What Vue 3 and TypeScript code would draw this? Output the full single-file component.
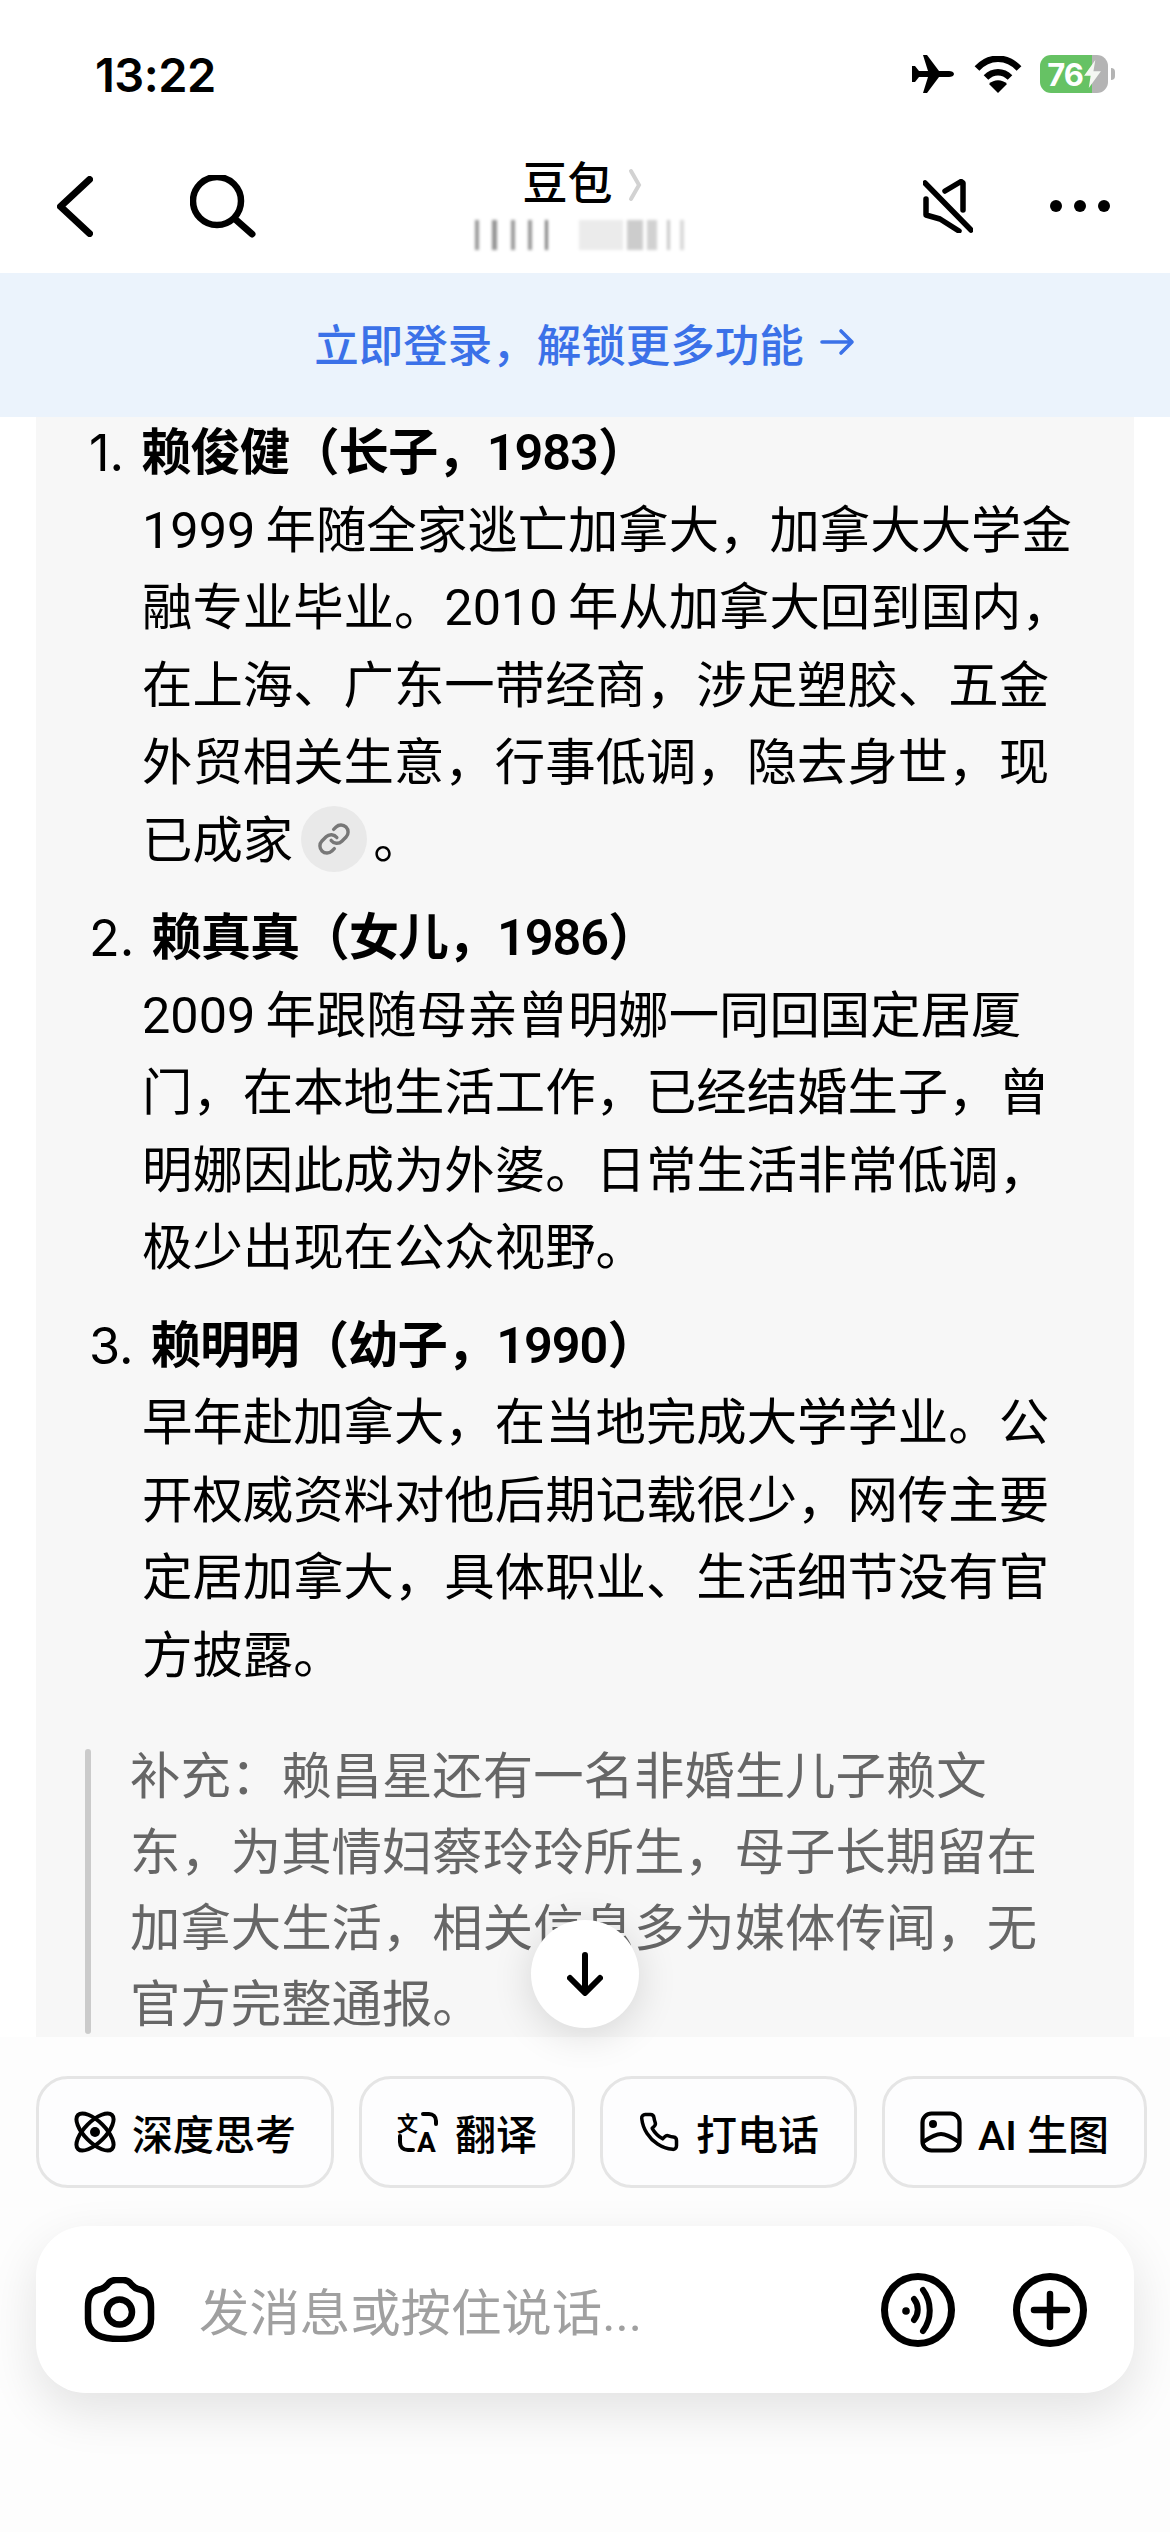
<script setup lang="ts">
interface Person {
  no: string
  title: string
  body: string
  cited?: boolean
}

const people: Person[] = [
  {
    no: '1.',
    title: '赖俊健\uFF08长子\uFF0C1983\uFF09',
    body: '1999\u2009年随全家逃亡加拿大\uFF0C加拿大大学金融专业毕业。2010\u2009年从加拿大回到国内\uFF0C在上海、广东一带经商\uFF0C涉足塑胶、五金外贸相关生意\uFF0C行事低调\uFF0C隐去身世\uFF0C现已成家',
    cited: true,
  },
  {
    no: '2.',
    title: '赖真真\uFF08女儿\uFF0C1986\uFF09',
    body: '2009\u2009年跟随母亲曾明娜一同回国定居厦门\uFF0C在本地生活工作\uFF0C已经结婚生子\uFF0C曾明娜因此成为外婆。日常生活非常低调\uFF0C极少出现在公众视野。',
  },
  {
    no: '3.',
    title: '赖明明\uFF08幼子\uFF0C1990\uFF09',
    body: '早年赴加拿大\uFF0C在当地完成大学学业。公开权威资料对他后期记载很少\uFF0C网传主要定居加拿大\uFF0C具体职业、生活细节没有官方披露。',
  },
]

const note = '补充\uFF1A赖昌星还有一名非婚生儿子赖文东\uFF0C为其情妇蔡玲玲所生\uFF0C母子长期留在加拿大生活\uFF0C相关信息多为媒体传闻\uFF0C无官方完整通报。'

const loginTip = '立即登录\uFF0C解锁更多功能'

const batteryLevel = 76

// 标题下面被打码的那一条
const blurBars = [
  { w: 4, gap: 13, o: 0.4 },
  { w: 5, gap: 14, o: 0.42 },
  { w: 4, gap: 13, o: 0.4 },
  { w: 4, gap: 13, o: 0.4 },
  { w: 3, gap: 31, o: 0.5 },
  { w: 44, gap: 4, o: 0.08 },
  { w: 16, gap: 4, o: 0.2 },
  { w: 10, gap: 10, o: 0.18 },
  { w: 3, gap: 10, o: 0.22 },
  { w: 4, gap: 0, o: 0.15 },
]
</script>

<template>
  <div class="page">
    <header class="top">
      <div class="status">
        <span class="time">13:22</span>
        <div class="status-icons">
          <svg class="plane" viewBox="0 0 42 38">
            <path d="M42 19c0 2-2.500 3-5 3H27L15 38h-4l5-16H7l-4 5H0V11h3l4 5h9L11 0h4l12 16h10c2.500 0 5 1 5 3z" fill="#000" />
          </svg>
          <svg class="wifi" viewBox="0 0 48 37">
            <path d="M3 12.500C15-.5 33-.5 45 12.500M12 21.500c7-7 17-7 24 0" fill="none" stroke="#000" stroke-width="6.500" />
            <path d="M24 37l-9-9c5-5 13-5 18 0z" fill="#000" />
          </svg>
          <div class="battery">
            <div
              class="battery-body"
              :style="{ background: `linear-gradient(90deg, #66c264 ${batteryLevel}%, #b4b4b4 ${batteryLevel}%)` }"
            >
              <span class="battery-num">{{ batteryLevel }}</span>
              <svg class="bolt" viewBox="0 0 18 30">
                <path d="M12 0L0 17h7L5 30 18 12h-8z" fill="#f4f7f2" />
              </svg>
            </div>
            <i class="battery-nub"></i>
          </div>
        </div>
      </div>

      <nav class="nav">
        <div class="nav-left">
          <svg class="back" viewBox="0 0 36 61">
            <path d="M32.500 3.500L3.500 30.500l29 27" fill="none" stroke="#000" stroke-width="7" stroke-linecap="round" stroke-linejoin="round" />
          </svg>
          <svg class="search" viewBox="0 0 66 63">
            <circle cx="27" cy="26" r="24" fill="none" stroke="#000" stroke-width="6.500" />
            <path d="M45 44l17 15" fill="none" stroke="#000" stroke-width="7" stroke-linecap="round" />
          </svg>
        </div>
        <div class="nav-title">
          <div class="title-row">
            <span class="title">豆包</span>
            <svg class="title-arrow" viewBox="0 0 14 34">
              <path d="M3 3l8 14-8 14" fill="none" stroke="#d2d2d2" stroke-width="4" stroke-linecap="round" />
            </svg>
          </div>
          <div class="blur-row">
            <i
              v-for="(bar, i) in blurBars"
              :key="i"
              :style="{ width: bar.w + 'px', marginRight: bar.gap + 'px', opacity: bar.o }"
            ></i>
          </div>
        </div>
        <div class="nav-right">
          <svg class="mute" viewBox="0 0 50 54">
            <g fill="none" stroke="#000" stroke-width="5.500" stroke-linecap="round" stroke-linejoin="round">
              <path d="M2 4l46 47" />
              <path d="M22 12L38 2.500 40 4v27" />
              <path d="M3 20v16l14 4 19 12" />
            </g>
          </svg>
          <div class="dots"><i></i><i></i><i></i></div>
        </div>
      </nav>
    </header>

    <div class="login-tip">
      <span>{{ loginTip }}</span>
      <svg class="tip-arrow" viewBox="0 0 36 30">
        <path d="M2 15h30M21 4l11 11-11 11" fill="none" stroke="#3b71e8" stroke-width="3.600" stroke-linecap="round" stroke-linejoin="round" />
      </svg>
    </div>

    <main class="chat">
      <div class="bubble">
        <section v-for="p in people" :key="p.no" class="person">
          <div class="person-head">
            <span class="person-no">{{ p.no }}</span>
            <strong>{{ p.title }}</strong>
          </div>
          <p class="person-body">
            {{ p.body }}<span v-if="p.cited" class="cite">
              <svg viewBox="0 0 24 24">
                <path d="M10 13a5 5 0 0 0 7.540.54l3-3a5 5 0 0 0-7.070-7.070l-1.720 1.710" />
                <path d="M14 11a5 5 0 0 0-7.540-.54l-3 3a5 5 0 0 0 7.070 7.070l1.710-1.710" />
              </svg>
            </span><template v-if="p.cited">。</template>
          </p>
        </section>
        <blockquote class="note">
          <i class="note-bar"></i>
          <p>{{ note }}</p>
        </blockquote>
      </div>
    </main>

    <div class="to-bottom">
      <svg viewBox="0 0 36 44">
        <path d="M18 3v37M3 26l15 15 15-15" fill="none" stroke="#000" stroke-width="6" stroke-linecap="round" stroke-linejoin="round" />
      </svg>
    </div>

    <footer class="bottom">
      <div class="chips">
        <button class="chip">
          <svg class="chip-icon" viewBox="0 0 42 42">
            <g fill="none" stroke="#000" stroke-width="4">
              <ellipse cx="21" cy="21" rx="24" ry="10.500" transform="rotate(45 21 21)" />
              <ellipse cx="21" cy="21" rx="24" ry="10.500" transform="rotate(-45 21 21)" />
            </g>
            <circle cx="21" cy="21" r="5" fill="#000" />
          </svg>
          深度思考
        </button>
        <button class="chip">
          <svg class="chip-icon tr-icon" viewBox="0 0 42 42">
            <text x="0" y="20" class="tr-zh">文</text>
            <text x="20" y="41" class="tr-en">A</text>
            <path d="M26 3h6c4 0 7 3 7 7v3M3 25v6c0 5 3 8 8 8h5" fill="none" stroke="#000" stroke-width="4" stroke-linecap="round" />
          </svg>
          翻译
        </button>
        <button class="chip">
          <svg class="chip-icon" viewBox="0 0 24 24">
            <path
              d="M22 16.920v3a2 2 0 0 1-2.180 2 19.790 19.790 0 0 1-8.630-3.070 19.500 19.500 0 0 1-6-6 19.790 19.790 0 0 1-3.070-8.670A2 2 0 0 1 4.110 2h3a2 2 0 0 1 2 1.720 12.840 12.840 0 0 0 .7 2.810 2 2 0 0 1-.45 2.110L8.090 9.910a16 16 0 0 0 6 6l1.270-1.270a2 2 0 0 1 2.110-.45 12.840 12.840 0 0 0 2.810.7A2 2 0 0 1 22 16.920z"
              fill="none"
              stroke="#000"
              stroke-width="2"
              stroke-linejoin="round"
            />
          </svg>
          打电话
        </button>
        <button class="chip">
          <svg class="chip-icon" viewBox="0 0 42 42">
            <rect x="2.500" y="2.500" width="37" height="37" rx="9" fill="none" stroke="#000" stroke-width="4.200" />
            <circle cx="13" cy="13" r="4" fill="#000" />
            <path d="M3 31c6-4 12-8 18-8s12 4 18 8" fill="none" stroke="#000" stroke-width="4.200" />
          </svg>
          AI 生图
        </button>
      </div>

      <div class="composer">
        <svg class="camera" viewBox="0 0 71 65">
          <path
            d="M4 30C4 19 7 14 17 12c4-1 5-3 7-5 2-3 4-4 8-4h7c4 0 6 1 8 4 2 2 3 4 7 5 10 2 13 7 13 18v12c0 14-11 20-31.500 20C15 62 4 56 4 42z"
            fill="none"
            stroke="#000"
            stroke-width="6.500"
          />
          <circle cx="35.500" cy="35" r="12.500" fill="none" stroke="#000" stroke-width="6.500" />
        </svg>
        <span class="placeholder">发消息或按住说话...</span>
        <svg class="round-btn voice" viewBox="0 0 74 74">
          <circle cx="37" cy="37" r="33.500" fill="none" stroke="#000" stroke-width="7" />
          <circle cx="25" cy="38" r="3.800" fill="#000" />
          <path d="M33 26c5 6 5 15 0 21M42 17c9 12 9 29 0 41" fill="none" stroke="#000" stroke-width="6" stroke-linecap="round" />
        </svg>
        <svg class="round-btn" viewBox="0 0 74 74">
          <circle cx="37" cy="37" r="33.500" fill="none" stroke="#000" stroke-width="7" />
          <path d="M37 21v33M21 37h33" fill="none" stroke="#000" stroke-width="6.500" stroke-linecap="round" />
        </svg>
      </div>
    </footer>
  </div>
</template>

<style scoped>
.page {
  position: relative;
  display: flex;
  flex-direction: column;
  width: 1170px;
  height: 2532px;
  overflow: hidden;
  background: #fff;
  color: #000;
  font-family: Roboto, "Noto Sans CJK SC", sans-serif;
}

svg {
  display: block;
  flex: none;
}

/* 顶部 */
.top {
  height: 273px;
  flex: none;
}

.status {
  display: flex;
  justify-content: space-between;
  align-items: center;
  height: 38px;
  padding: 55px 55px 0 95px;
}

.time {
  font-family: Inter, sans-serif;
  font-size: 47px;
  font-weight: 600;
  letter-spacing: -0.5px;
}

.status-icons {
  display: flex;
  align-items: center;
  gap: 20px;
}

.plane {
  width: 42px;
  height: 38px;
}

.wifi {
  width: 48px;
  height: 37px;
}

.battery {
  display: flex;
  align-items: center;
  gap: 3px;
  margin-left: -2px;
}

.battery-body {
  display: flex;
  align-items: center;
  justify-content: center;
  gap: 1px;
  width: 68px;
  height: 38px;
  border-radius: 11px;
}

.battery-num {
  color: #fff;
  font-family: Inter, sans-serif;
  font-size: 31px;
  font-weight: 700;
  letter-spacing: -1px;
}

.bolt {
  width: 17px;
  height: 28px;
}

.battery-nub {
  width: 4px;
  height: 12px;
  border-radius: 0 6px 6px 0;
  background: #b4b4b4;
}

.nav {
  display: grid;
  grid-template-columns: 1fr auto 1fr;
  align-items: start;
  height: 90px;
  margin-top: 69px;
  padding: 0 60px 0 57px;
}

.nav-left {
  display: flex;
  align-items: center;
  gap: 97px;
  padding-top: 13px;
}

.back {
  width: 36px;
  height: 61px;
}

.search {
  width: 66px;
  height: 63px;
}

.nav-title {
  width: 212px;
  margin-right: 6px;
}

.title-row {
  display: flex;
  align-items: center;
  gap: 15px;
  padding-left: 48px;
}

.title {
  font-size: 45px;
  font-weight: 500;
  line-height: 46px;
}

.title-arrow {
  width: 14px;
  height: 34px;
}

.blur-row {
  display: flex;
  height: 30px;
  margin-top: 12px;
  filter: blur(1.4px);
}

.blur-row i {
  flex: none;
  height: 30px;
  background: #000;
}

.nav-right {
  display: flex;
  justify-content: flex-end;
  align-items: center;
  gap: 77px;
  padding-top: 17px;
}

.mute {
  width: 50px;
  height: 54px;
}

.dots {
  display: flex;
  gap: 12px;
}

.dots i {
  width: 12px;
  height: 12px;
  border-radius: 50%;
  background: #000;
}

.login-tip {
  display: flex;
  justify-content: center;
  align-items: center;
  gap: 16px;
  flex: none;
  height: 138px;
  padding-bottom: 6px;
  background: #ebf3fc;
  color: #3b71e8;
  font-size: 44.500px;
  font-weight: 500;
}

.tip-arrow {
  width: 36px;
  height: 30px;
}

/* 对话内容 */
.chat {
  flex: 1;
  min-height: 0;
  padding: 0 36px;
}

.bubble {
  height: 100%;
  overflow: hidden;
  background: #f7f7f7;
  font-size: 50.400px;
  line-height: 77.500px;
}

.person {
  padding: 0 51px 0 53px;
  margin-bottom: 20px;
}

.person:first-child {
  margin-top: -3px;
}

.person-head {
  display: flex;
  gap: 17px;
}

.person-no {
  font-family: Inter, sans-serif;
}

.person-head strong {
  font-weight: 600;
  letter-spacing: -1px;
}

.person-body {
  margin: 0;
  padding-left: 53px;
}

.cite {
  display: inline-flex;
  justify-content: center;
  align-items: center;
  width: 66px;
  height: 66px;
  margin: -12px 6px -12px 8px;
  border-radius: 50%;
  background: #e9e9e9;
  vertical-align: 2px;
}

.cite svg {
  width: 34px;
  height: 34px;
  fill: none;
  stroke: #777;
  stroke-width: 2.400;
  stroke-linecap: round;
}

.note {
  display: flex;
  gap: 39px;
  margin: 55px 0 0 49px;
  width: 975px;
  height: 285px;
  color: #666;
}

.note-bar {
  flex: none;
  width: 6px;
  border-radius: 3px;
  background: #cbcbcb;
}

.note p {
  width: 930px;
  margin: -10px 0 0;
  line-height: 76px;
}

.to-bottom {
  position: absolute;
  left: 531px;
  top: 1920px;
  display: flex;
  justify-content: center;
  align-items: center;
  width: 108px;
  height: 108px;
  border-radius: 50%;
  background: #fff;
  box-shadow: 0 6px 40px rgba(0, 0, 0, 0.14);
}

.to-bottom svg {
  width: 36px;
  height: 44px;
}

/* 底部输入区 */
.bottom {
  flex: none;
  height: 495px;
  padding: 39px 36px 0;
  box-sizing: border-box;
  background: #fdfdfd;
}

.chips {
  display: flex;
  gap: 25px;
  width: 1130px;
}

.chip {
  display: flex;
  align-items: center;
  gap: 16px;
  flex: none;
  height: 112px;
  padding: 0 35px;
  border: 3px solid #e5e5e5;
  border-radius: 32px;
  background: #fdfdfe;
  color: #000;
  font-family: inherit;
  font-size: 41px;
  font-weight: 500;
}

.chip-icon {
  width: 42px;
  height: 42px;
}

.tr-icon {
  overflow: visible;
}

.tr-zh {
  font-family: "Noto Sans CJK SC", sans-serif;
  font-size: 21px;
  font-weight: 700;
}

.tr-en {
  font-family: Roboto, sans-serif;
  font-size: 28px;
  font-weight: 700;
}

.composer {
  display: flex;
  align-items: center;
  height: 167px;
  margin-top: 38px;
  padding: 0 47px 0 48px;
  border-radius: 50px;
  background: #fff;
  box-shadow: 0 18px 50px rgba(0, 0, 0, 0.11);
}

.camera {
  width: 71px;
  height: 65px;
}

.placeholder {
  flex: 1;
  margin-left: 44px;
  color: #a0a0a0;
  font-size: 50.400px;
}

.round-btn {
  width: 74px;
  height: 74px;
}

.voice {
  margin-right: 58px;
}
</style>

<style>
html,
body {
  margin: 0;
  background: #fff;
}
</style>
